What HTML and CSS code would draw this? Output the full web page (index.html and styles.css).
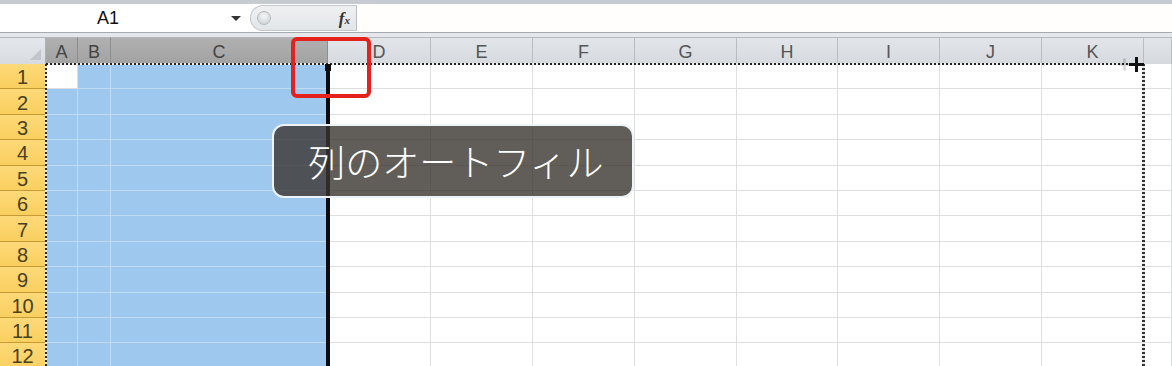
FILE: index.html
```html
<!DOCTYPE html>
<html lang="ja">
<head>
    <meta charset="UTF-8">
    <title>列のオートフィル</title>
    <link rel="stylesheet" href="styles.css">
</head>
<body>
<div class="app">
    <div class="ribbon-edge"></div>
    <div class="formula-bar">
        <div class="name-box">
            <span class="name-text">A1</span>
            <span class="name-arrow"></span>
        </div>
        <div class="fx-area">
            <span class="knob"></span>
            <span class="fx">f<sub>x</sub></span>
        </div>
        <div class="formula-input"></div>
    </div>
    <div class="bar-gap"></div>

    <div class="sheet">
        <div class="grid">
            <div class="corner"><span class="corner-tri"></span></div>
            <div class="col-head sel">A</div>
            <div class="col-head sel">B</div>
            <div class="col-head sel">C</div>
            <div class="col-head">D</div>
            <div class="col-head">E</div>
            <div class="col-head">F</div>
            <div class="col-head">G</div>
            <div class="col-head">H</div>
            <div class="col-head">I</div>
            <div class="col-head">J</div>
            <div class="col-head">K</div>
            <div class="col-head last"></div>
        </div>
        <div class="rows" id="rows"></div>

        <!-- marching ants round the copied range -->
        <div class="ants ants-top"></div>
        <div class="ants ants-left"></div>
        <div class="ants ants-right"></div>

        <div class="fill-line"></div>
        <div class="fill-square"></div>

        <div class="cursor ghost"></div>
        <div class="cursor"></div>
    </div>

    <div class="highlight"></div>
    <div class="caption">列のオートフィル</div>
</div>

<script>
    var rows = document.getElementById('rows');
    for (var r = 1; r <= 12; r++) {
        var row = document.createElement('div');
        row.className = 'grid row';
        var html = '<div class="row-head">' + r + '</div>';
        for (var c = 0; c < 12; c++) {
            var cls = 'cell';
            if (c < 3 && !(r === 1 && c === 0)) cls += ' sel';
            if (c === 11) cls += ' last';
            html += '<div class="' + cls + '"></div>';
        }
        row.innerHTML = html;
        rows.appendChild(row);
    }
</script>
</body>
</html>
```

FILE: styles.css
```css
body {
    margin: 0;
    font-family: "Liberation Sans", Arial, sans-serif;
    background-color: #ffffff;
    overflow: hidden;
}

.app {
    position: relative;
    width: 1172px;
    height: 366px;
    overflow: hidden;
}

.ribbon-edge {
    height: 4px;
    background-color: #c6cbd1;
}

/* formula bar */
.formula-bar {
    display: flex;
    height: 28px;
    border-bottom: 1px solid #a6abb1;
    background-color: #ffffff;
}

.name-box {
    width: 250px;
    display: flex;
    align-items: center;
    position: relative;
}

.name-text {
    width: 216px;
    text-align: center;
    font-size: 18px;
    color: #111;
}

.name-arrow {
    margin-left: 15px;
    width: 0;
    height: 0;
    border-left: 5px solid transparent;
    border-right: 5px solid transparent;
    border-top: 5px solid #333;
}

.fx-area {
    width: 107px;
    display: flex;
    align-items: center;
    justify-content: space-between;
    background: linear-gradient(#eef0f2, #e3e6e9);
    border-radius: 14px 0 0 14px;
    border: 1px solid #c3c7cc;
    border-right: 1px solid #b8bcc1;
    box-sizing: border-box;
    margin: 1px 0;
    padding: 0 6px 0 6px;
}

.knob {
    width: 12px;
    height: 12px;
    border-radius: 50%;
    background: radial-gradient(circle at 50% 35%, #f4f5f6, #c9cdd1);
    border: 1px solid #b6babf;
}

.fx {
    font-family: "Liberation Serif", serif;
    font-style: italic;
    font-weight: bold;
    font-size: 17px;
    color: #333;
    line-height: 1;
}

.fx sub {
    font-size: 11px;
    vertical-align: 0;
}

.formula-input {
    flex: 1;
    background-color: #fffefc;
}

.bar-gap {
    height: 4px;
    background-color: #e5e7ea;
}

/* sheet */
.sheet {
    position: relative;
}

.grid {
    display: grid;
    grid-template-columns: 46px 32px 33px 217px 103px 102px 102px 102px 101px 102px 102px 102px 1fr;
}

.corner,
.col-head {
    height: 27px;
    box-sizing: border-box;
    border-top: 1px solid #b3b7bc;
    border-right: 1px solid #b9bdc2;
    background: linear-gradient(#e2e5e9, #d6d9dd);
    display: flex;
    align-items: center;
    justify-content: center;
    font-size: 18px;
    line-height: 18px;
    color: #555555;
    padding-top: 1px;
}

.col-head.sel {
    background: linear-gradient(#b0b0b0, #a2a2a2);
    border-right-color: #8e8e8e;
    color: #444444;
}

.corner {
    position: relative;
    background: linear-gradient(#e4e7eb, #d8dbdf);
    border-right-color: #aeb2b7;
}

.corner-tri {
    position: absolute;
    right: 4px;
    bottom: 4px;
    width: 0;
    height: 0;
    border-left: 11px solid transparent;
    border-bottom: 11px solid #c2c6cb;
}

.row {
    height: 25.4px;
    grid-template-rows: 25.4px;
    overflow: hidden;
}

.row-head {
    box-sizing: border-box;
    background: linear-gradient(#fdd978, #f9cf5f);
    border-bottom: 1px solid #c89a33;
    border-right: 1px solid #c89a33;
    display: flex;
    align-items: center;
    justify-content: center;
    font-size: 20px;
    line-height: 20px;
    color: #4a3f1e;
    padding-top: 2px;
}

.cell {
    box-sizing: border-box;
    border-right: 1px solid #dcdedf;
    border-bottom: 1px solid #dcdedf;
    background-color: #ffffff;
}

.cell.sel {
    background-color: #9fc8ef;
    border-right-color: #c3dcf3;
    border-bottom-color: #c0daf2;
}

/* marching ants */
.ants {
    position: absolute;
}

.ants-top {
    left: 46px;
    top: 26px;
    width: 1097px;
    height: 2px;
    background: repeating-linear-gradient(90deg, #222 0 2px, #f0f0f0 2px 4px);
}

.ants-left {
    left: 45px;
    top: 27px;
    width: 2px;
    height: 310px;
    background: repeating-linear-gradient(180deg, #222 0 2px, #f4f4f4 2px 4px);
}

.ants-right {
    left: 1142px;
    top: 27px;
    width: 3px;
    height: 310px;
    background: repeating-linear-gradient(180deg, #333 0 2px, #e8e8e8 2px 4px);
}

/* fill handle drag */
.fill-line {
    position: absolute;
    left: 326px;
    top: 27px;
    width: 4px;
    height: 310px;
    background-color: #0c0c0c;
}

.fill-square {
    position: absolute;
    left: 325px;
    top: 27px;
    width: 6px;
    height: 7px;
    background-color: #0c0c0c;
}

.cursor {
    position: absolute;
    left: 1129px;
    top: 20px;
    width: 15px;
    height: 15px;
}

.cursor::before,
.cursor::after {
    content: "";
    position: absolute;
    background-color: #111;
}

.cursor::before {
    left: 0;
    top: 6px;
    width: 15px;
    height: 3px;
}

.cursor::after {
    left: 6px;
    top: 0;
    width: 3px;
    height: 15px;
}

.cursor.ghost {
    left: 1117px;
    opacity: 0.18;
    transform: scale(0.8);
}

/* annotation */
.highlight {
    position: absolute;
    left: 291px;
    top: 37px;
    width: 80px;
    height: 61px;
    box-sizing: border-box;
    border: 4px solid #e4221b;
    border-radius: 6px;
}

.caption {
    position: absolute;
    left: 272px;
    top: 124px;
    width: 362px;
    height: 74px;
    box-sizing: border-box;
    border: 2px solid #eef3f7;
    border-radius: 12px;
    background-color: rgba(58, 53, 48, 0.8);
    color: #ffffff;
    font-family: "Noto Sans CJK JP", sans-serif;
    font-weight: 300;
    font-size: 37px;
    display: flex;
    align-items: center;
    justify-content: center;
    padding-left: 6px;
}
```
